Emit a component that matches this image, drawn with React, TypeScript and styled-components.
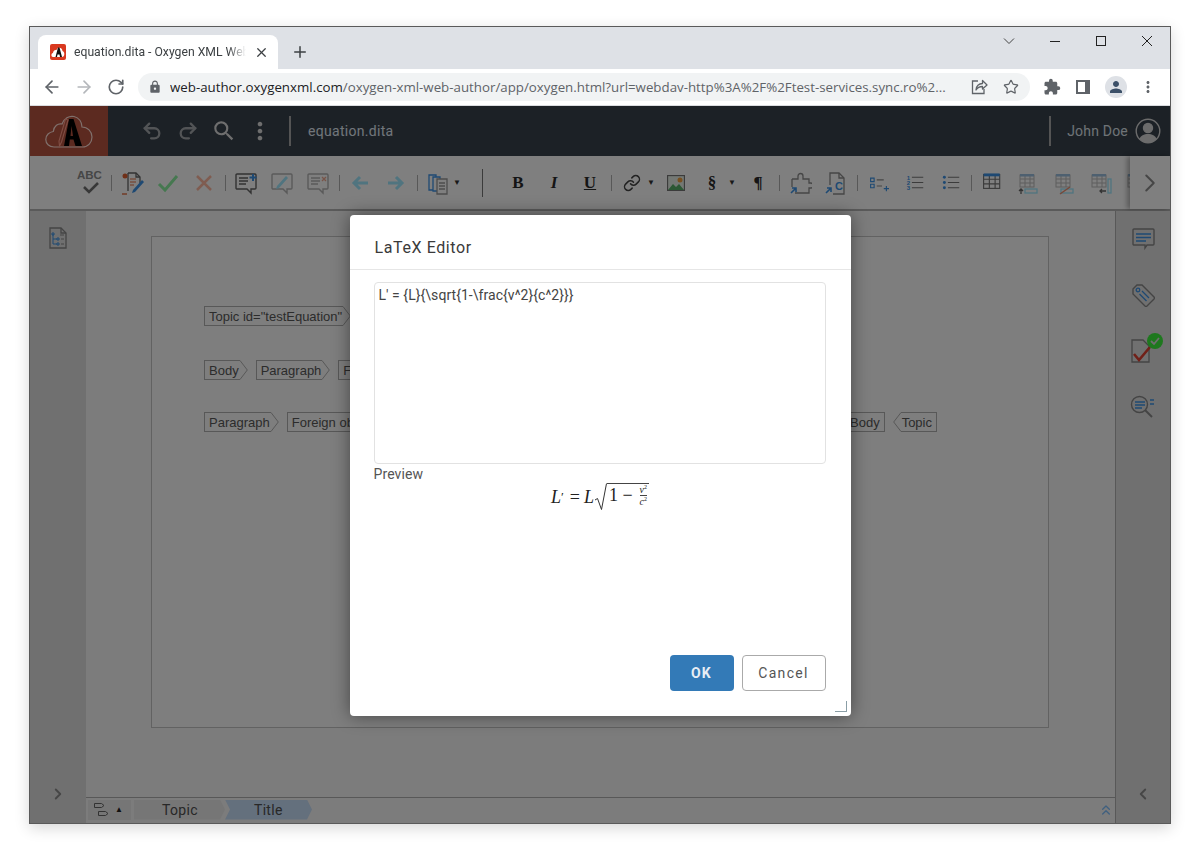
import styled, { createGlobalStyle } from 'styled-components'
import { ArrowLeft, ArrowRight, ChevronLeft, ChevronRight, ChevronsUp, Link, Plus, Redo2, RotateCw, Star, Undo2, X } from 'lucide-react'
import { MdExtension, MdLock, MdMoreVert, MdPerson, MdSearch } from 'react-icons/md'

// colours of the app are written at double brightness, the backdrop halves them
const INK = '#8c8c8c'
const BLUE = '#3d93e6'
const SOFTBLUE = '#a0e8ff'

const GlobalStyle = createGlobalStyle`
  html, body { margin: 0; padding: 0; background: #fff; }
  body { font-family: Roboto, "Liberation Sans", sans-serif; }
  * { box-sizing: border-box; }
`

const BrowserWindow = styled.div`
  position: absolute;
  left: 29px;
  top: 26px;
  width: 1142px;
  height: 798px;
  border: 1px solid #5a5a5a;
  display: flex;
  flex-direction: column;
  box-shadow: 0 4px 14px rgba(0, 0, 0, 0.16);
  overflow: hidden;
`
const TabStrip = styled.div`
  height: 42px;
  flex: none;
  background: #dee1e6;
  display: flex;
  align-items: flex-end;
  padding-left: 8px;
`
const Tab = styled.div`
  width: 240px;
  height: 34px;
  background: #fff;
  border-radius: 8px 8px 0 0;
  display: flex;
  align-items: center;
  padding: 0 9px 0 12px;
  gap: 8px;
  color: #3c4043;
`
const TabTitle = styled.span`
  flex: 1;
  font: 12.2px Roboto, sans-serif;
  white-space: nowrap;
  overflow: hidden;
  mask-image: linear-gradient(to right, #000 90%, transparent);
`
const NewTab = styled.div`
  width: 44px;
  height: 34px;
  display: flex;
  align-items: center;
  justify-content: center;
  color: #3c4043;
`
const WindowControls = styled.div`
  margin-left: auto;
  align-self: flex-start;
  display: flex;
`
const WindowControl = styled.div`
  width: 46px;
  height: 28px;
  display: flex;
  align-items: center;
  justify-content: center;
`
const ChromeBar = styled.div`
  height: 37px;
  flex: none;
  background: #fff;
  border-bottom: 1px solid #dadce0;
  display: flex;
  align-items: center;
  padding: 0 6px 1px 6px;
`
const NavButton = styled.div<{ $faded?: boolean }>`
  width: 32px;
  height: 28px;
  flex: none;
  display: flex;
  align-items: center;
  justify-content: center;
  color: ${p => (p.$faded ? '#b4b7bb' : '#5f6368')};
`
const Omnibox = styled.div`
  width: 892px;
  height: 28px;
  flex: none;
  margin: 0 6px 0 6px;
  background: #f1f3f4;
  border-radius: 14px;
  display: flex;
  align-items: center;
  padding-left: 10px;
  color: #5f6368;
`
const Url = styled.div`
  flex: none;
  width: 783px;
  margin: 0 10px 0 8px;
  font: 13.3px "Open Sans", sans-serif;
  color: #5f6368;
  white-space: nowrap;
  overflow: hidden;
  & b { font-weight: 400; color: #202124; }
`
const OmniIcon = styled.div`
  width: 32px;
  display: flex;
  justify-content: center;
`
const ProfileDot = styled.div`
  width: 22px;
  height: 22px;
  border-radius: 50%;
  background: #dee1e6;
  color: #3c5068;
  display: flex;
  align-items: center;
  justify-content: center;
`
const AppArea = styled.div`
  position: relative;
  flex: 1;
  min-height: 0;
  display: flex;
  flex-direction: column;
`
const AppHeader = styled.div`
  height: 50px;
  flex: none;
  background: #38424c;
  display: flex;
  align-items: center;
  color: #d8d8d8;
`
const LogoBox = styled.div`
  width: 78px;
  height: 100%;
  background: #b85440;
  display: flex;
  align-items: center;
  justify-content: center;
`
const HeaderTools = styled.div`
  display: flex;
  align-items: center;
  margin: 0 11px 0 26px;
`
const HeaderTool = styled.div<{ $faded?: boolean }>`
  width: 36px;
  display: flex;
  justify-content: center;
  color: ${p => (p.$faded ? '#a4a8ac' : '#dcdcdc')};
`
const HeaderRule = styled.div`
  width: 2px;
  height: 30px;
  background: #a8a8a8;
`
const FileName = styled.span`
  margin-left: 17px;
  font-size: 14px;
  letter-spacing: 0.3px;
  color: #e2ecf6;
`
const UserName = styled.span`
  margin: 0 7px 0 16px;
  font-size: 14px;
  letter-spacing: 0.2px;
  color: #dfe6ec;
`
const HeaderRight = styled.div`
  margin-left: auto;
  display: flex;
  align-items: center;
  padding-right: 9px;
`
const Toolbar = styled.div`
  height: 55px;
  flex: none;
  background: #fff;
  border-bottom: 2px solid #b4b4b4;
  display: flex;
`
const ToolRow = styled.div`
  flex: 1;
  min-width: 0;
  overflow: hidden;
  display: flex;
  align-items: center;
  padding-left: 42px;
`
const ToolButton = styled.div`
  width: 36px;
  height: 30px;
  flex: none;
  display: flex;
  align-items: center;
  justify-content: center;
`
const ToolSep = styled.div`
  width: 6px;
  flex: none;
  height: 16px;
  display: flex;
  justify-content: center;
  &::before { content: ''; width: 1px; background: #b0b0b0; }
`
const ToolDivider = styled.div`
  width: 36px;
  flex: none;
  height: 28px;
  display: flex;
  justify-content: center;
  &::before { content: ''; width: 1px; background: #777; }
`
const Caret = styled.div<{ $wide?: boolean }>`
  width: ${p => (p.$wide ? '16px' : '14px')};
  flex: none;
  margin-left: -6px;
  font-size: 8px;
  text-align: center;
  color: #333;
`
const FormatGlyph = styled.span<{ $italic?: boolean; $under?: boolean }>`
  font: ${p => (p.$italic ? 'italic' : 'normal')} 700 17px "Liberation Serif", serif;
  text-decoration: ${p => (p.$under ? 'underline' : 'none')};
  color: #2a2a2a;
`
const ScrollEnd = styled.div`
  width: 40px;
  flex: none;
  background: #ffffff;
  box-shadow: -3px 0 5px rgba(0, 0, 0, 0.3);
  display: flex;
  align-items: center;
  justify-content: center;
  color: ${INK};
`
const Workspace = styled.div`
  flex: 1;
  min-height: 0;
  display: flex;
`
const SidePanel = styled.div<{ $right?: boolean }>`
  width: ${p => (p.$right ? '55px' : '56px')};
  flex: none;
  background: #e0e0e0;
  border-left: ${p => (p.$right ? '1px solid #b0b0b0' : 'none')};
  display: flex;
  flex-direction: column;
  align-items: center;
  padding: 16px 0 16px;
  color: ${INK};
`
const SideIcon = styled.div`
  height: 56px;
  flex: none;
  display: flex;
  justify-content: center;
  position: relative;
`
const SideToggle = styled.div`
  margin-top: auto;
`
const StatusBadge = styled.div`
  position: absolute;
  top: -6px;
  right: -8px;
  width: 16px;
  height: 16px;
  border-radius: 50%;
  background: #3cf03c;
  display: flex;
  align-items: center;
  justify-content: center;
`
const EditorColumn = styled.div`
  flex: 1;
  min-width: 0;
  display: flex;
  flex-direction: column;
  background: #f8f8f8;
`
const EditorScroll = styled.div`
  flex: 1;
  padding: 25px 66px 0 65px;
`
const Sheet = styled.div`
  height: 492px;
  background: #fcfcfc;
  border: 1px solid #c4c4c4;
  padding: 69px 111px 0 52px;
  display: flex;
  flex-direction: column;
  gap: 32px;
`
const TagRow = styled.div<{ $loose?: boolean }>`
  display: flex;
  justify-content: space-between;
  height: 20px;
  margin-top: ${p => (p.$loose ? '2px' : '0')};
`
const TagGroup = styled.div`
  display: flex;
  gap: 8px;
`
const TagWrap = styled.div`
  display: flex;
  height: 20px;
`
const TagBody = styled.span<{ $reverse?: boolean }>`
  font: 13px "Liberation Sans", sans-serif;
  line-height: 19px;
  color: #585858;
  padding: 0 ${p => (p.$reverse ? '4px' : '0')} 0 ${p => (p.$reverse ? '0' : '4px')};
  border: 1px solid #b0b0b0;
  border-${p => (p.$reverse ? 'left' : 'right')}: none;
  white-space: nowrap;
`
const Crumbs = styled.div`
  height: 26px;
  flex: none;
  border-top: 1px solid #b0b0b0;
  display: flex;
  align-items: center;
  padding: 0 1px 2px 2px;
  gap: 3px;
`
const CrumbMenu = styled.div`
  width: 43px;
  height: 20px;
  background: #ececec;
  display: flex;
  align-items: center;
  justify-content: space-between;
  padding: 0 8px 0 5px;
  font-size: 8px;
  color: #222;
`
const Crumb = styled.div<{ $active?: boolean }>`
  width: ${p => (p.$active ? '87px' : '91px')};
  height: 20px;
  margin-left: ${p => (p.$active ? '-3px' : '0')};
  font-size: 14px;
  line-height: 20px;
  padding-left: ${p => (p.$active ? '29px' : '28px')};
  letter-spacing: 0.3px;
  color: #505050;
  background: ${p => (p.$active ? '#c8e0fb' : '#ececec')};
  clip-path: polygon(0 0, calc(100% - 5px) 0, 100% 50%, calc(100% - 5px) 100%, 0 100%${p => (p.$active ? ', 5px 50%' : '')});
`
const CrumbCollapse = styled.div`
  margin-left: auto;
  display: flex;
  color: #80c0ff;
`
const Backdrop = styled.div`
  position: absolute;
  inset: 0;
  padding-top: 2px;
  background: rgba(0, 0, 0, 0.5);
  display: flex;
  align-items: center;
  justify-content: center;
`
const Dialog = styled.div`
  position: relative;
  width: 501px;
  height: 501px;
  background: #fff;
  border-radius: 4px;
  box-shadow: 0 0 18px rgba(0, 0, 0, 0.45);
  display: flex;
  flex-direction: column;
`
const DialogTitle = styled.div`
  height: 55px;
  flex: none;
  border-bottom: 1px solid #e6e6e6;
  padding: 23px 0 0 25px;
  font-size: 16px;
  line-height: 19px;
  letter-spacing: 0.6px;
  color: #3a3a3a;
`
const DialogBody = styled.div`
  flex: 1;
  padding: 12px 25px 0 24px;
  display: flex;
  flex-direction: column;
`
const LatexInput = styled.textarea`
  width: 452px;
  height: 182px;
  flex: none;
  resize: none;
  outline: none;
  border: 1px solid #e2e2e2;
  border-radius: 4px;
  padding: 4px;
  font: 14px/16px Roboto, sans-serif;
  letter-spacing: 0.05px;
  color: #444;
`
const PreviewLabel = styled.div`
  margin-top: 1px;
  font-size: 14px;
  line-height: 18px;
  letter-spacing: 0.1px;
  color: #555;
`
const Formula = styled.div`
  display: flex;
  justify-content: center;
  align-items: center;
  height: 28px;
  padding-left: 1px;
  font: 18px "Liberation Serif", serif;
  color: #222;
  & i { font-style: italic; }
  & sup { font-size: 13px; line-height: 0; }
`
const Relation = styled.span`
  margin: 0 4px 0 6px;
`
const Radicand = styled.span`
  border-top: 1px solid #444;
  display: flex;
  align-items: center;
  height: 28px;
  gap: 4px;
  padding: 0 1px 4px 2px;
`
const Fraction = styled.span`
  display: inline-flex;
  flex-direction: column;
  align-items: center;
  font-size: 10px;
  line-height: 9px;
  margin-left: 2px;
  padding: 0 1px;
  & > span:first-child { border-bottom: 1px solid #444; padding-bottom: 1px; }
  & > span:last-child { padding-top: 1px; }
  & sup { font-size: 6px; }
`
const DialogFooter = styled.div`
  height: 61px;
  flex: none;
  display: flex;
  justify-content: flex-end;
  gap: 8px;
  padding: 0 25px 25px 0;
`
const DialogButton = styled.button<{ $primary?: boolean }>`
  width: ${p => (p.$primary ? '64px' : '84px')};
  height: 36px;
  border-radius: 4px;
  font: ${p => (p.$primary ? 700 : 400)} 14px Roboto, sans-serif;
  letter-spacing: 1.3px;
  color: ${p => (p.$primary ? '#e8eef5' : '#555')};
  background: ${p => (p.$primary ? '#337ab7' : '#fff')};
  border: ${p => (p.$primary ? 'none' : '1px solid #aaa')};
`
const ResizeGrip = styled.div`
  position: absolute;
  right: 4px;
  bottom: 4px;
  width: 12px;
  height: 11px;
  border-right: 1px solid #8a9ea6;
  border-bottom: 1px solid #8a9ea6;
`

const Icon = ({ children, w = 24, h = 24, size }: { children: React.ReactNode; w?: number; h?: number; size?: number }) => (
  <svg width={size ?? w} height={size ?? h} viewBox={`0 0 ${w} ${h}`} fill="none" strokeWidth={1.3}>{children}</svg>
)

const AppLogo = () => (
  <svg width="48" height="33" viewBox="0 0 48 33" fill="none">
    <path d="M9 32C4 32 .8 28.500.8 24.500c0-4.500 3.500-7.500 7.500-8C9 11 13 8 17 9c2-5.500 7-8.500 12-7.500 5 1 8 5.500 8 10.500 5.500 0 10 4.500 10 10s-4 10-9.500 10Z" stroke="#ffe0d8" strokeWidth="1.200" />
    <path d="M19 31 24 4h4.500L37 31h-6.500l-2-6.500h-3.700L24 31Zm6.500-10h2.500L26.500 11Z" fill="#000" fillRule="evenodd" />
    <path d="M14.500 31 14 26 20.500 4 23 5l-6.500 22Z" stroke="#ff9a88" strokeWidth="1.100" />
  </svg>
)

const Favicon = () => (
  <svg width="16" height="16" viewBox="0 0 16 16">
    <rect width="16" height="16" rx="2" fill="#d9391f" />
    <path d="M3 13C1 13 .8 9.500 3 9c.2-2.500 2-3.500 3.500-3C7.500 3 12 3 12.500 7c2.500.5 2.500 6-.5 6Z" fill="#fff" />
    <path d="M5.500 13 8 3.500h1.500L12 13h-2l-.5-2.500H7.500L7 13Z" fill="#111" />
  </svg>
)

const ShareIcon = () => (
  <svg width="18" height="18" viewBox="0 0 18 18" fill="none" stroke="#5f6368" strokeWidth="1.3">
    <path d="M8 3H2.500v12.500H14V11" />
    <path d="M6 12c0-4 3-6.500 6.500-6.500V2.500L17 7l-4.500 4V8.500C9.500 8.500 7.500 9.500 6 12Z" strokeLinejoin="round" />
  </svg>
)

const PanelIcon = () => (
  <svg width="16" height="14" viewBox="0 0 16 14">
    <path d="M0 0h14v14H0Z" fill="#5f6368" />
    <rect x="2" y="2" width="7" height="10" fill="#fff" />
  </svg>
)

const WindowGlyph = ({ kind }: { kind: 'menu' | 'min' | 'max' | 'close' }) => (
  <svg width="12" height="12" viewBox="0 0 12 12" fill="none" stroke="#222" strokeWidth="1">
    {kind === 'menu' && <path d="M1 3.500l5 5 5-5" stroke="#444" />}
    {kind === 'min' && <path d="M1 6.500h10" />}
    {kind === 'max' && <rect x="1.500" y="1.500" width="9" height="9" />}
    {kind === 'close' && <path d="M1 1l10 10M11 1 1 11" />}
  </svg>
)

const UserAvatar = () => (
  <svg width="26" height="26" viewBox="0 0 26 26" fill="none" stroke="#d8d8d8" strokeWidth="1.400">
    <circle cx="13" cy="13" r="11.800" />
    <circle cx="13" cy="10" r="4.500" fill="#d8d8d8" />
    <path d="M4.500 21c1-3.500 4.500-5 8.500-5s7.500 1.500 8.500 5c-2 2.500-5 4-8.500 4s-6.500-1.500-8.500-4Z" fill="#d8d8d8" stroke="none" />
  </svg>
)

const SpellIcon = () => (
  <svg width="28" height="28" viewBox="0 0 28 28" fill="none">
    <text x="1" y="10" fontFamily="Liberation Sans" fontWeight="700" fontSize="11.500" fill={INK}>ABC</text>
    <path d="M8 18l5 5 9-9" stroke="#707070" strokeWidth="2.600" />
  </svg>
)

const ReviewIcon = () => (
  <Icon>
    <path d="M8 2h8l4 4v6M8 2v18" stroke="#666" />
    <path d="M16 2v4h4" stroke="#666" />
    <path d="M10 8h6M10 11h6M10 14h4" stroke="#f0a080" />
    <circle cx="5" cy="5" r="2.500" fill="#e06030" />
    <path d="M2 23h5" stroke="#e06030" />
    <path d="M13 19l9-10 2 2-9 10-3 1Z" fill={BLUE} />
  </Icon>
)

const CommentIcon = ({ accent }: { accent?: 'add' | 'edit' | 'remove' }) => (
  <Icon>
    <path d="M3 3h18a1 1 0 0 1 1 1v13a1 1 0 0 1-1 1h-4v4l-4-4H3a1 1 0 0 1-1-1V4a1 1 0 0 1 1-1Z" stroke={accent === 'add' ? '#666' : '#b4b4b4'} strokeWidth="1.400" />
    {accent !== 'edit' && <path d="M5 7h9M5 10h9M5 13h7" stroke={accent === 'add' ? '#666' : '#b4b4b4'} />}
    {accent === 'add' && <path d="M19 3v7M15.500 6.500h7" stroke={BLUE} strokeWidth="2" />}
    {accent === 'edit' && <path d="M7 15l9-10 2 2-9 10-3 1Z" fill={SOFTBLUE} />}
    {accent === 'remove' && <path d="M16 6l4 4M20 6l-4 4" stroke="#f0a890" />}
  </Icon>
)

const BlockArrow = ({ left }: { left?: boolean }) => (
  <svg width="18" height="16" viewBox="0 0 18 16" fill="none" stroke={SOFTBLUE} strokeWidth="3">
    {left ? <path d="M17 8H3M9 2 3 8l6 6" /> : <path d="M1 8h14M9 2l6 6-6 6" />}
  </svg>
)

const CopyIcon = () => (
  <Icon>
    <path d="M3 4h7v15H3Z" stroke={BLUE} />
    <path d="M7 6h7v14H7Z" stroke={BLUE} fill="#fff" />
    <path d="M11 8h10v15H11Z" stroke="#999" fill="#fff" />
    <path d="M13 12h6M13 15h6M13 18h6" stroke="#999" />
  </Icon>
)

const ImageIcon = () => (
  <Icon w={18} h={16}>
    <rect x="0.500" y="0.500" width="17" height="15" stroke="#777" fill="#e8f0e8" />
    <path d="M1 15l5-6 3 3 3-3 5 6Z" fill="#58b068" />
    <circle cx="13" cy="5" r="2.500" fill="#f0a040" />
  </Icon>
)

const PuzzleIcon = () => (
  <Icon>
    <path d="M4 8h6V5a2.500 2.500 0 0 1 5 0v3h6v4h1.500a2.500 2.500 0 0 1 0 5H21v5H7" stroke={INK} />
    <path d="M4 8v8" stroke={INK} />
    <path d="M3 22l5-5M4 17h4v4" stroke={BLUE} strokeWidth="1.600" />
  </Icon>
)

const DocRefIcon = () => (
  <Icon>
    <path d="M6 14V2h9l5 5v16H9" stroke={INK} />
    <path d="M15 2v5h5" stroke={INK} />
    <text x="11" y="19" fontFamily="Liberation Sans" fontWeight="700" fontSize="11" fill={BLUE}>C</text>
    <path d="M2 22l5-5M3 17h4v4" stroke={BLUE} strokeWidth="1.600" />
  </Icon>
)

const ListIcon = ({ kind }: { kind: 'add' | 'num' | 'bullet' }) => (
  <Icon size={21}>
    {kind === 'add' && <>
      <path d="M3 7h4v4H3ZM3 14h4v4H3Z" stroke={BLUE} />
      <path d="M10 9h8M10 16h6" stroke={INK} />
      <path d="M18 19h6M21 16v6" stroke={BLUE} />
    </>}
    {kind === 'num' && <>
      <text x="3" y="9" fontSize="7" fontWeight="700" fontFamily="Liberation Sans" fill={BLUE}>1</text>
      <text x="3" y="15" fontSize="7" fontWeight="700" fontFamily="Liberation Sans" fill={BLUE}>2</text>
      <text x="3" y="21" fontSize="7" fontWeight="700" fontFamily="Liberation Sans" fill={BLUE}>3</text>
      <path d="M9 6h13M9 12h13M9 18h13" stroke="#777" />
    </>}
    {kind === 'bullet' && <>
      <circle cx="5" cy="6" r="1.700" fill={BLUE} />
      <circle cx="5" cy="12" r="1.700" fill={BLUE} />
      <circle cx="5" cy="18" r="1.700" fill={BLUE} />
      <path d="M9 6h13M9 12h13M9 18h13" stroke="#777" />
    </>}
  </Icon>
)

const TableGrid = ({ head, faded }: { head: string; faded?: boolean }) => (
  <g stroke={faded ? '#bbb' : '#777'} strokeWidth="1">
    <rect x="4" y="4" width="14" height="12" fill="#fff" />
    <path d="M4 8h14M4 12h14M9 4v12M14 4v12" />
    <rect x="4" y="3" width="14" height="2.500" fill={head} stroke="none" />
  </g>
)

const TableIcon = ({ kind }: { kind: 'full' | 'row' | 'del' | 'col' }) => (
  <Icon>
    {kind === 'full' && <g transform="translate(-1,-1) scale(1.150)"><TableGrid head={BLUE} /></g>}
    {kind === 'row' && <>
      <TableGrid head="#9cc0e0" faded />
      <rect x="9" y="18" width="12" height="4" stroke={SOFTBLUE} />
      <path d="M5 23v-5M3 20l2-2 2 2" stroke="#666" />
    </>}
    {kind === 'del' && <>
      <TableGrid head="#9cc0e0" faded />
      <rect x="9" y="18" width="12" height="4" stroke={SOFTBLUE} />
      <path d="M8 23l10-7" stroke="#f09070" strokeWidth="1.500" />
    </>}
    {kind === 'col' && <>
      <TableGrid head="#9cc0e0" faded />
      <rect x="20" y="8" width="3" height="14" stroke={SOFTBLUE} />
      <path d="M12 20h6M14 18l-2 2 2 2" stroke="#666" />
    </>}
  </Icon>
)

const OutlineIcon = () => (
  <Icon w={18} h={22}>
    <path d="M1 1h11l5 5v15H1Z" stroke="#888" />
    <path d="M12 1v5h5" stroke="#888" />
    <path d="M4 7v10M4 12h4M4 17h4" stroke={BLUE} strokeWidth="1" />
    <path d="M3 6h2v2H3ZM8 11h2v2H8ZM8 16h2v2H8Z" stroke={BLUE} strokeWidth="1" />
    <path d="M11 8h4M12 12h3M12 17h3" stroke="#888" strokeWidth="1" />
  </Icon>
)

const NoteIcon = () => (
  <Icon>
    <path d="M3 2h19a1 1 0 0 1 1 1v14a1 1 0 0 1-1 1h-6l-2 3v-3H3a1 1 0 0 1-1-1V3a1 1 0 0 1 1-1Z" stroke="#888" strokeWidth="1.400" />
    <path d="M5 7h15M5 10.500h15M5 14h10" stroke={BLUE} />
  </Icon>
)

const TagIcon = () => (
  <Icon>
    <path d="M2 6l4-4h5l12 12a1.500 1.500 0 0 1 0 2l-7 7a1.500 1.500 0 0 1-2 0L2 11Z" stroke="#888" strokeWidth="1.400" />
    <circle cx="7" cy="7" r="1.800" stroke={BLUE} />
    <path d="M11 8l7 7M8.500 11l7 7" stroke={BLUE} />
  </Icon>
)

const ValidateIcon = () => (
  <Icon w={24} h={24}>
    <path d="M1 1h11l6 6v16H1Z" stroke="#888" />
    <path d="M3 15l5 6L19 8" stroke="#e04030" strokeWidth="2.600" />
  </Icon>
)

const FindIcon = () => (
  <Icon w={26} h={24}>
    <circle cx="9.500" cy="9.500" r="8" stroke="#888" strokeWidth="1.400" />
    <path d="M15 15l7 7" stroke="#888" strokeWidth="2" />
    <path d="M5 7h10M5 10h10M5 13h7M20 5h4M20 9h4" stroke={BLUE} />
  </Icon>
)

const BreadcrumbIcon = () => (
  <svg width="16" height="16" viewBox="0 0 16 16" fill="none" stroke="#666" strokeWidth="1">
    <path d="M1.500 1.500h7l2.500 2-2.500 2h-7ZM5.500 9.500h7l2.500 2-2.500 2h-7Z" />
  </svg>
)

const Tag = ({ label, closing }: { label: string; closing?: boolean }) => (
  <TagWrap>
    {closing && (
      <svg width="9" height="20" fill="none" stroke="#b0b0b0"><path d="M9 .5H8L.7 10 8 19.500h1" /></svg>
    )}
    <TagBody $reverse={closing}>{label}</TagBody>
    {!closing && (
      <svg width="9" height="20" fill="none" stroke="#b0b0b0"><path d="M0 .5h1L8.300 10 1 19.500H0" /></svg>
    )}
  </TagWrap>
)

export default function App() {
  return (
    <>
      <GlobalStyle />
      <BrowserWindow>
        <TabStrip>
          <Tab>
            <Favicon />
            <TabTitle>equation.dita - Oxygen XML Web Author</TabTitle>
            <X size={15} strokeWidth={2} />
          </Tab>
          <NewTab><Plus size={18} strokeWidth={2} /></NewTab>
          <WindowControls>
            <WindowControl><WindowGlyph kind="menu" /></WindowControl>
            <WindowControl><WindowGlyph kind="min" /></WindowControl>
            <WindowControl><WindowGlyph kind="max" /></WindowControl>
            <WindowControl><WindowGlyph kind="close" /></WindowControl>
          </WindowControls>
        </TabStrip>
        <ChromeBar>
          <NavButton><ArrowLeft size={20} strokeWidth={2} /></NavButton>
          <NavButton $faded><ArrowRight size={20} strokeWidth={2} /></NavButton>
          <NavButton><RotateCw size={18} strokeWidth={2.200} /></NavButton>
          <Omnibox>
            <MdLock size={14} />
            <Url><b>web-author.oxygenxml.com</b>/oxygen-xml-web-author/app/oxygen.html?url=webdav-http%3A%2F%2Ftest-services.sync.ro%2...</Url>
            <OmniIcon><ShareIcon /></OmniIcon>
            <OmniIcon><Star size={16} strokeWidth={1.800} /></OmniIcon>
          </Omnibox>
          <NavButton><MdExtension size={18} /></NavButton>
          <NavButton><PanelIcon /></NavButton>
          <NavButton><ProfileDot><MdPerson size={18} /></ProfileDot></NavButton>
          <NavButton><MdMoreVert size={18} /></NavButton>
        </ChromeBar>
        <AppArea>
          <AppHeader>
            <LogoBox><AppLogo /></LogoBox>
            <HeaderTools>
              <HeaderTool $faded><Undo2 size={22} strokeWidth={2.500} /></HeaderTool>
              <HeaderTool $faded><Redo2 size={22} strokeWidth={2.500} /></HeaderTool>
              <HeaderTool><MdSearch size={26} /></HeaderTool>
              <HeaderTool><MdMoreVert size={28} /></HeaderTool>
            </HeaderTools>
            <HeaderRule />
            <FileName>equation.dita</FileName>
            <HeaderRight>
              <HeaderRule />
              <UserName>John Doe</UserName>
              <UserAvatar />
            </HeaderRight>
          </AppHeader>
          <Toolbar>
            <ToolRow>
              <ToolButton><SpellIcon /></ToolButton>
              <ToolSep />
              <ToolButton><ReviewIcon /></ToolButton>
              <ToolButton><svg width="22" height="20" fill="none"><path d="M2 11l6 6L20 3" stroke="#8cf0a0" strokeWidth="3" /></svg></ToolButton>
              <ToolButton><svg width="20" height="20" fill="none"><path d="M3 3l14 14M17 3 3 17" stroke="#ffb8a0" strokeWidth="2.500" /></svg></ToolButton>
              <ToolSep />
              <ToolButton><CommentIcon accent="add" /></ToolButton>
              <ToolButton><CommentIcon accent="edit" /></ToolButton>
              <ToolButton><CommentIcon accent="remove" /></ToolButton>
              <ToolSep />
              <ToolButton><BlockArrow left /></ToolButton>
              <ToolButton><BlockArrow /></ToolButton>
              <ToolSep />
              <ToolButton><CopyIcon /></ToolButton>
              <Caret>▼</Caret>
              <ToolDivider />
              <ToolButton><FormatGlyph>B</FormatGlyph></ToolButton>
              <ToolButton><FormatGlyph $italic>I</FormatGlyph></ToolButton>
              <ToolButton><FormatGlyph $under>U</FormatGlyph></ToolButton>
              <ToolSep />
              <ToolButton><Link size={18} strokeWidth={2} color="#444" /></ToolButton>
              <Caret>▼</Caret>
              <ToolButton><ImageIcon /></ToolButton>
              <ToolButton><FormatGlyph>§</FormatGlyph></ToolButton>
              <Caret $wide>▼</Caret>
              <ToolButton><FormatGlyph>¶</FormatGlyph></ToolButton>
              <ToolSep />
              <ToolButton><PuzzleIcon /></ToolButton>
              <ToolButton><DocRefIcon /></ToolButton>
              <ToolSep />
              <ToolButton><ListIcon kind="add" /></ToolButton>
              <ToolButton><ListIcon kind="num" /></ToolButton>
              <ToolButton><ListIcon kind="bullet" /></ToolButton>
              <ToolSep />
              <ToolButton><TableIcon kind="full" /></ToolButton>
              <ToolButton><TableIcon kind="row" /></ToolButton>
              <ToolButton><TableIcon kind="del" /></ToolButton>
              <ToolButton><TableIcon kind="col" /></ToolButton>
              <ToolButton><TableIcon kind="col" /></ToolButton>
            </ToolRow>
            <ScrollEnd><ChevronRight size={30} strokeWidth={1.600} /></ScrollEnd>
          </Toolbar>
          <Workspace>
            <SidePanel>
              <SideIcon><OutlineIcon /></SideIcon>
              <SideToggle><ChevronRight size={18} strokeWidth={2.500} /></SideToggle>
            </SidePanel>
            <EditorColumn>
              <EditorScroll>
                <Sheet>
                  <TagRow>
                    <TagGroup><Tag label={'Topic id="testEquation"'} /></TagGroup>
                  </TagRow>
                  <TagRow $loose>
                    <TagGroup>
                      <Tag label="Body" />
                      <Tag label="Paragraph" />
                      <Tag label="Foreign object" />
                    </TagGroup>
                  </TagRow>
                  <TagRow>
                    <TagGroup>
                      <Tag label="Paragraph" />
                      <Tag label="Foreign object" />
                    </TagGroup>
                    <TagGroup>
                      <Tag label="Body" closing />
                      <Tag label="Topic" closing />
                    </TagGroup>
                  </TagRow>
                </Sheet>
              </EditorScroll>
              <Crumbs>
                <CrumbMenu><BreadcrumbIcon />▲</CrumbMenu>
                <Crumb>Topic</Crumb>
                <Crumb $active>Title</Crumb>
                <CrumbCollapse><ChevronsUp size={16} strokeWidth={2} /></CrumbCollapse>
              </Crumbs>
            </EditorColumn>
            <SidePanel $right>
              <SideIcon><NoteIcon /></SideIcon>
              <SideIcon><TagIcon /></SideIcon>
              <SideIcon>
                <ValidateIcon />
                <StatusBadge>
                  <svg width="12" height="12" fill="none"><path d="M2 6l3 3 5-6" stroke="#ddd" strokeWidth="1.800" /></svg>
                </StatusBadge>
              </SideIcon>
              <SideIcon><FindIcon /></SideIcon>
              <SideToggle><ChevronLeft size={18} strokeWidth={2.500} /></SideToggle>
            </SidePanel>
          </Workspace>
          <Backdrop>
            <Dialog>
              <DialogTitle>LaTeX Editor</DialogTitle>
              <DialogBody>
                <LatexInput readOnly defaultValue={"L' = {L}{\\sqrt{1-\\frac{v^2}{c^2}}}"} />
                <PreviewLabel>Preview</PreviewLabel>
                <Formula>
                  <i>L</i><sup>′</sup><Relation>=</Relation><i>L</i>
                  <svg width="13" height="28" fill="none" stroke="#333"><path d="M1 17l2.500-1.500 4 11L12.500.5" /></svg>
                  <Radicand>1 −<Fraction><span><i>v</i><sup>2</sup></span><span><i>c</i><sup>2</sup></span></Fraction></Radicand>
                </Formula>
              </DialogBody>
              <DialogFooter>
                <DialogButton $primary>OK</DialogButton>
                <DialogButton>Cancel</DialogButton>
              </DialogFooter>
              <ResizeGrip />
            </Dialog>
          </Backdrop>
        </AppArea>
      </BrowserWindow>
    </>
  )
}
